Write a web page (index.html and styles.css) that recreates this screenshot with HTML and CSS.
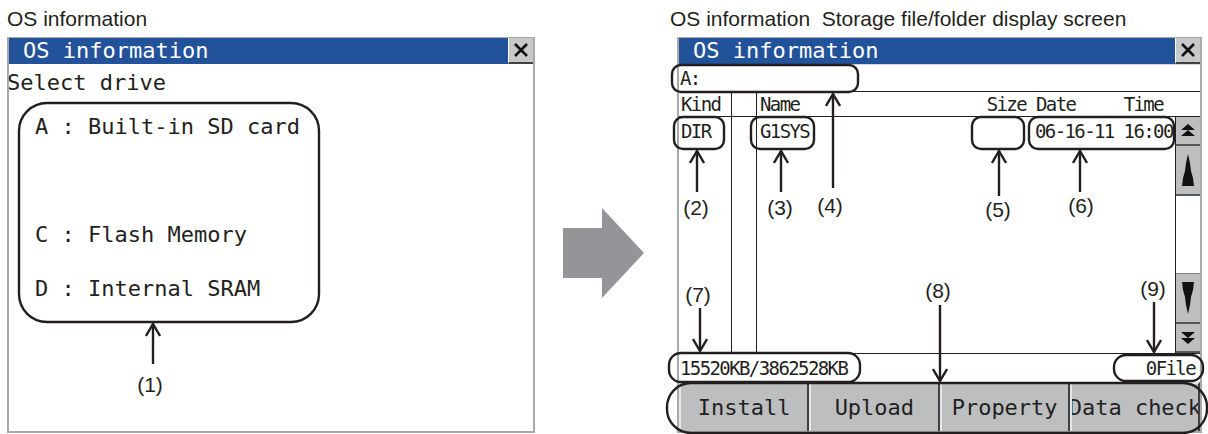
FILE: index.html
```html
<!DOCTYPE html>
<html lang="en">
<head>
  <meta charset="UTF-8">
  <title>OS information</title>
  <link rel="stylesheet" href="styles.css">
</head>
<body>
  <div class="page">

    <!-- Drive selection screen -->
    <section class="panel panel-left">
      <p class="caption">OS information</p>
      <div class="window window-left">
        <div class="titlebar">
          <span class="title">OS information</span>
          <span class="close">
            <svg width="16" height="16" viewBox="0 0 16 16"><path d="M2 2 L14 14 M14 2 L2 14" stroke="#111" stroke-width="2.6"/></svg>
          </span>
        </div>
        <div class="prompt">Select drive</div>
        <ul class="drives">
          <li>A : Built-in SD card</li>
          <li class="skip">C : Flash Memory</li>
          <li>D : Internal SRAM</li>
        </ul>
      </div>
    </section>

    <div class="shift">
      <svg width="81" height="90" viewBox="0 0 81 90"><polygon points="0,20 39,20 39,0 81,45 39,90 39,70 0,70" fill="#939598"/></svg>
    </div>

    <!-- Storage file/folder display screen -->
    <section class="panel panel-right">
      <p class="caption">OS information  Storage file/folder display screen</p>
      <div class="window window-right">
        <div class="titlebar">
          <span class="title">OS information</span>
          <span class="close">
            <svg width="16" height="16" viewBox="0 0 16 16"><path d="M2 2 L14 14 M14 2 L2 14" stroke="#111" stroke-width="2.6"/></svg>
          </span>
        </div>
        <div class="path">A:</div>
        <div class="cols head">
          <span class="cell">Kind</span>
          <span class="cell"></span>
          <span class="main">
            <span class="c-name">Name</span>
            <span class="c-size">Size</span>
            <span class="c-stamp"><span>Date</span><span>Time</span></span>
          </span>
          <span></span>
        </div>
        <div class="cols list">
          <span class="cell">DIR</span>
          <span class="cell"></span>
          <span class="main">
            <span class="c-name">G1SYS</span>
            <span class="c-size"></span>
            <span class="c-stamp">06-16-11 16:00</span>
          </span>
          <div class="scrollbar">
            <span class="sbtn sbtn-end">
              <svg width="16" height="14" viewBox="0 0 16 14"><path d="M8 0 L15 6 L1 6 Z M8 6 L15 12 L1 12 Z" fill="#111"/></svg>
            </span>
            <span class="sbtn sbtn-step">
              <svg width="14" height="32" viewBox="0 0 14 32"><polygon points="7,0 9,9 10,17 12,24 13,32 1,32 2,24 4,17 5,9" fill="#111"/></svg>
            </span>
            <span class="track"></span>
            <span class="sbtn sbtn-step">
              <svg width="14" height="32" viewBox="0 0 14 32"><polygon points="1,0 13,0 12,8 10,15 9,23 7,32 5,23 4,15 2,8" fill="#111"/></svg>
            </span>
            <span class="sbtn sbtn-end">
              <svg width="16" height="14" viewBox="0 0 16 14"><path d="M1 1 L15 1 L8 7 Z M1 7 L15 7 L8 13 Z" fill="#111"/></svg>
            </span>
          </div>
        </div>
        <div class="status">
          <span>15520KB/3862528KB</span>
          <span>0File</span>
        </div>
        <div class="actions">
          <span class="btn">Install</span>
          <span class="btn">Upload</span>
          <span class="btn">Property</span>
          <span class="btn">Data check</span>
        </div>
      </div>
    </section>

    <!-- Callouts drawn over both screens -->
    <svg class="notes" width="1208" height="434" viewBox="0 0 1208 434">
      <defs>
        <marker id="head" viewBox="0 0 14 16" refX="13" refY="8" markerWidth="14" markerHeight="16" markerUnits="userSpaceOnUse" orient="auto">
          <path d="M1 1 L13 8 L1 15" fill="none" stroke="#231f20" stroke-width="2.4"/>
        </marker>
      </defs>
      <g fill="none" stroke="#231f20" stroke-width="2.4">
        <rect x="19" y="103" width="300" height="219" rx="28"/>
        <rect x="672" y="65" width="186" height="27" rx="9"/>
        <rect x="674" y="117" width="50" height="32" rx="9"/>
        <rect x="751" y="117" width="63" height="32" rx="9"/>
        <rect x="972" y="117" width="52" height="32" rx="9"/>
        <rect x="1029" y="117" width="145" height="32" rx="9"/>
        <rect x="669" y="353" width="191" height="29" rx="12"/>
        <rect x="1114" y="355" width="89" height="26" rx="12"/>
        <rect x="667" y="383" width="540" height="50" rx="24"/>
      </g>
      <g stroke="#231f20" stroke-width="2.4" marker-end="url(#head)">
        <line x1="153" y1="364" x2="153" y2="324"/>
        <line x1="697" y1="192" x2="697" y2="151"/>
        <line x1="781" y1="192" x2="781" y2="151"/>
        <line x1="833" y1="188" x2="833" y2="94"/>
        <line x1="999" y1="196" x2="999" y2="151"/>
        <line x1="1080" y1="192" x2="1080" y2="151"/>
        <line x1="700" y1="308" x2="700" y2="351"/>
        <line x1="940" y1="305" x2="940" y2="381"/>
        <line x1="1154" y1="302" x2="1154" y2="352"/>
      </g>
      <g class="labels" text-anchor="middle">
        <text x="150" y="392">(1)</text>
        <text x="696" y="215">(2)</text>
        <text x="780" y="215">(3)</text>
        <text x="830" y="213">(4)</text>
        <text x="998" y="217">(5)</text>
        <text x="1081" y="213">(6)</text>
        <text x="698" y="302">(7)</text>
        <text x="938" y="298">(8)</text>
        <text x="1153" y="296">(9)</text>
      </g>
    </svg>

  </div>
</body>
</html>
```

FILE: styles.css
```css
* {
  box-sizing: border-box;
}

body {
  margin: 0;
  background: #fff;
  font-family: "Liberation Sans", Arial, sans-serif;
  color: #231f20;
}

.page {
  position: relative;
  width: 1208px;
  height: 434px;
  display: flex;
  align-items: flex-start;
  overflow: hidden;
}

.caption {
  margin: 0;
  height: 37px;
  line-height: 37px;
  font-size: 21px;
  white-space: pre;
}

.panel-left {
  margin-left: 7px;
  width: 528px;
}

.panel-right {
  margin-left: 26px;
  width: 538px;
}

.shift {
  margin: 208px 0 0 28px;
  width: 81px;
  height: 90px;
}

/* GOT window frame */
.window {
  height: 396px;
  display: flex;
  flex-direction: column;
  border: 2px solid #a7a9ac;
  border-top-width: 1px;
  background: #fff;
  overflow: hidden;
  font-family: "DejaVu Sans Mono", monospace;
}

.window-right {
  margin-left: 7px;
  width: 525px;
}

.titlebar {
  display: flex;
  flex: none;
  height: 26px;
}

.title {
  flex: 1;
  padding-left: 14px;
  background: #22529a;
  color: #fff;
  font-size: 22px;
  line-height: 26px;
}

.close {
  width: 25px;
  display: flex;
  align-items: center;
  justify-content: center;
  border-left: 1px solid #fff;
  border-bottom: 2px solid #414042;
  background: #c7c8ca;
}

/* Drive list */
.prompt {
  margin: 4px 0 0 -2px;
  font-size: 22px;
  line-height: 30px;
}

.drives {
  margin: 2px 0 0;
  padding: 0 0 0 26px;
  list-style: none;
  font-size: 22px;
  line-height: 54px;
}

.drives .skip {
  margin-top: 54px;
}

/* File listing */
.path,
.cols,
.status {
  font-size: 19px;
  letter-spacing: -1.6px;
  white-space: pre;
}

.path {
  flex: none;
  height: 28px;
  padding-left: 1px;
  border-top: 1px solid #d1d3d4;
  border-bottom: 1px solid #231f20;
  line-height: 26px;
}

.cols {
  display: grid;
  grid-template-columns: 53px 25px 1fr 25px;
  flex: none;
}

.head {
  height: 25px;
  border-bottom: 1px solid #231f20;
  line-height: 24px;
}

.list {
  height: 236px;
  line-height: 29px;
}

.cell {
  padding-left: 2px;
  border-right: 1px solid #231f20;
}

.main {
  display: flex;
  align-items: flex-start;
}

.c-name {
  flex: 1;
  padding-left: 3px;
}

.c-size {
  width: 50px;
  text-align: right;
}

.c-stamp {
  width: 149px;
  display: flex;
  justify-content: space-between;
  padding: 0 12px 0 10px;
}

.list .c-stamp {
  padding: 0 0 0 9px;
}

.scrollbar {
  display: flex;
  flex-direction: column;
  border-left: 1px solid #231f20;
}

.sbtn {
  display: flex;
  align-items: center;
  justify-content: center;
  background: #bcbec0;
  border-bottom: 2px solid #58595b;
}

.sbtn-end {
  height: 29px;
}

.sbtn-step {
  height: 50px;
}

.track {
  flex: 1;
  border-bottom: 1px solid #808285;
}

.status {
  flex: none;
  display: flex;
  justify-content: space-between;
  height: 29px;
  padding: 0 5px 0 1px;
  border-top: 1px solid #231f20;
  line-height: 28px;
}

.actions {
  flex: 1;
  display: grid;
  grid-template-columns: repeat(4, 1fr);
}

.btn {
  overflow: hidden;
  white-space: nowrap;
  display: flex;
  align-items: center;
  justify-content: center;
  background: #bcbec0;
  border-top: 2px solid #e6e7e8;
  border-left: 2px solid #e6e7e8;
  border-right: 2px solid #414042;
  font-size: 22px;
}

/* Callouts */
.notes {
  position: absolute;
  top: 0;
  left: 0;
  pointer-events: none;
}

.labels {
  font-family: "Liberation Sans", Arial, sans-serif;
  font-size: 21px;
  fill: #231f20;
}
```
